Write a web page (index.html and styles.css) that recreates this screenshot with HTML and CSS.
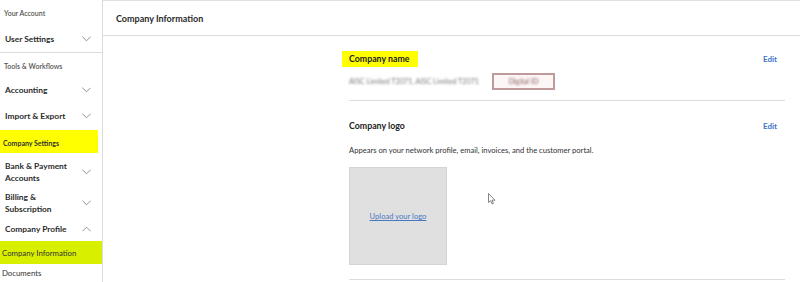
FILE: index.html
```html
<!DOCTYPE html>
<html>
<head>
<meta charset="utf-8">
<link rel="stylesheet" href="styles.css">
</head>
<body>
<div class="app">
  <nav class="sidebar">
    <div class="label">Your Account</div>
    <div class="item"><span>User Settings</span><svg class="chev" viewBox="0 0 10 6"><path d="M0.5 0.5 L5 5 L9.5 0.5"/></svg></div>
    <div class="label sep">Tools &amp; Workflows</div>
    <div class="item"><span>Accounting</span><svg class="chev" viewBox="0 0 10 6"><path d="M0.5 0.5 L5 5 L9.5 0.5"/></svg></div>
    <div class="item"><span>Import &amp; Export</span><svg class="chev" viewBox="0 0 10 6"><path d="M0.5 0.5 L5 5 L9.5 0.5"/></svg></div>
    <div class="label hl-yellow">Company Settings</div>
    <div class="item tall"><span>Bank &amp; Payment<br>Accounts</span><svg class="chev" viewBox="0 0 10 6"><path d="M0.5 0.5 L5 5 L9.5 0.5"/></svg></div>
    <div class="item tall2"><span>Billing &amp;<br>Subscription</span><svg class="chev" viewBox="0 0 10 6"><path d="M0.5 0.5 L5 5 L9.5 0.5"/></svg></div>
    <div class="item short"><span>Company Profile</span><svg class="chev" viewBox="0 0 10 6"><path d="M0.5 5.5 L5 1 L9.5 5.5"/></svg></div>
    <div class="sub hl-green">Company Information</div>
    <div class="sub">Documents</div>
  </nav>
  <main class="main">
    <header class="header">Company Information</header>
    <div class="content">
      <section class="block first">
        <div class="row">
          <h2 class="title hl-title">Company name</h2>
          <a class="edit">Edit</a>
        </div>
        <div class="namevals">
          <span class="blur">AISC Limited T2071, AISC Limited T2071</span>
          <span class="redbox"><span class="blur">Digital ID</span></span>
        </div>
      </section>
      <section class="block second">
        <div class="row">
          <h2 class="title">Company logo</h2>
          <a class="edit">Edit</a>
        </div>
        <p class="desc">Appears on your network profile, email, invoices, and the customer portal.</p>
        <div class="logorow">
          <div class="logobox"><a class="upload">Upload your logo</a></div>
          <svg class="cursor" viewBox="0 0 8 12"><path d="M0.5 0.5 L0.5 9.5 L2.6 7.6 L4 11 L5.4 10.4 L4 7.2 L7 7.2 Z"/></svg>
        </div>
      </section>
    </div>
  </main>
</div>
</body>
</html>
```
FILE: styles.css
```css
* { box-sizing: border-box; margin: 0; padding: 0; }
html, body { width: 800px; height: 282px; overflow: hidden; background: #fff; }
body { font-family: Lato, "Open Sans", sans-serif; color: #2b2b2b; }
.app { display: flex; height: 282px; }
.sidebar {
  width: 103px; flex: none; border-right: 1px solid #dcdcdc;
  display: flex; flex-direction: column;
}
.label {
  height: 26px; flex: none; display: flex; align-items: center; padding-left: 4px;
  font-size: 7px; font-weight: 600; color: #555;
}
.label.sep { border-top: 1px solid #dcdcdc; height: 25px; padding-top: 1px; }
.item {
  height: 26px; flex: none; display: flex; align-items: center; justify-content: space-between;
  padding: 0 11px 0 5px; font-size: 8.4px; font-weight: 700; color: #2b2b2b; line-height: 12px;
}
.item.tall { height: 36px; padding-top: 2px; }
.item.tall2 { height: 27px; }
.item.short { height: 25px; }
.chev { width: 9px; height: 6px; fill: none; stroke: #777; stroke-width: 0.9; }
.hl-yellow {
  background: #ffff00; height: 23px; width: 98px; margin-top: 1px; padding-top: 2px;
  font-weight: 700; color: #333; padding-left: 3px;
}
.sub {
  height: 18px; flex: none; display: flex; align-items: center; padding-left: 2px;
  font-size: 7.8px; color: #333;
}
.hl-green { background: #d8ef00; height: 23px; }
.main { flex: 1; display: flex; flex-direction: column; border-top: 1px solid #e0e0e0; }
.header {
  height: 35px; border-bottom: 1.5px solid #dcdcdc; display: flex; align-items: center;
  padding-left: 13px; font-size: 9px; font-weight: 700; color: #2b2b2b;
}
.content { padding: 0 15px 0 246px; }
.block { border-bottom: 1.5px solid #dcdcdc; }
.block.first { padding-top: 15px; height: 65px; }
.row { display: flex; justify-content: space-between; align-items: center; padding-right: 8px; }
.title { font-size: 8.8px; font-weight: 700; color: #222; }
.hl-title { background: #ffff00; margin-left: -7px; padding: 0 8px 0 7px; height: 16px; line-height: 16px; }
.edit { font-size: 8px; font-weight: 700; color: #3f74c6; }
.namevals { display: flex; align-items: center; margin-top: 6px; gap: 13px; }
.blur { filter: blur(0.9px); font-size: 7.2px; color: #7a7a7a; }
.redbox {
  display: inline-flex; align-items: center; justify-content: center;
  width: 63px; height: 17px; border: 2.5px solid #bf9a9a; background: #fdf6f6;
}
.redbox .blur { color: #8a5a5a; }
.block.second { padding-top: 19px; height: 179px; }
.desc { font-size: 7.6px; color: #333; margin-top: 14px; }
.logorow { display: flex; margin-top: 12px; }
.logobox {
  width: 98px; height: 98px; background: #e0e0e0; border: 1px solid #d4d4d4;
  display: flex; align-items: center; justify-content: center;
}
.upload { font-size: 7.6px; color: #4a78c0; text-decoration: underline; }
.cursor { width: 8px; height: 12px; margin: 26px 0 0 41px; fill: #fff; stroke: #666; stroke-width: 0.8; }
```
